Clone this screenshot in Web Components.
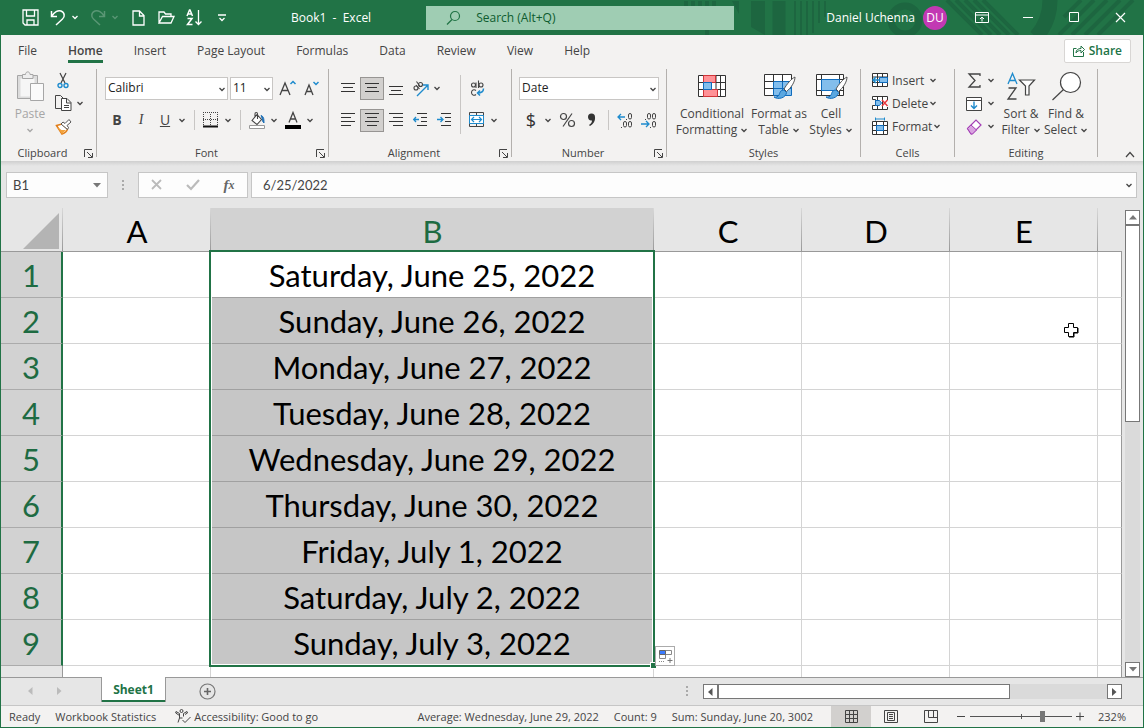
<!DOCTYPE html>
<html lang="en">
<head>
<meta charset="utf-8">
<title>Book1 - Excel</title>
<style>
  html, body { height: 100%; }
  body {
    margin: 0;
    font: 12px/16px "Open Sans", "Noto Sans", sans-serif;
    color: #444;
    --green: #217346;
    --bar: #f3f2f1;
    --head: #e6e6e6;
    --blue: #1e8bcd;
  }
</style>
</head>
<body>
<xl-app></xl-app>

<script>
(function() {
  // icon name -> [width, height, svg content]
  const lines = (rows) => rows.map(r => `<path d="M${r[0]} ${r[1]}.5h${r[2]}" stroke="#333"/>`).join('');
  const brush = '<path d="M31 5c-4 2-8 7-11 12l2.500 2.500C27 16 31 10 31 5z" fill="#fff" stroke="#555"/><path d="M20 18c-4 0-4 3-5 5-1 2-3 2-5 2 4 3 12 1 12.500-4.500z" fill="#5aa7e0" stroke="#0f6cbd"/>';
  const icons = {
    chevron: [8, 5, '<path d="M1.500 1l2.500 2.500L6.500 1" stroke="currentColor" stroke-width="1.300"/>'],
    save: [17, 17, '<path d="M1 1h15v15H3l-2-2zM4.500 1v6h8V1M5 16v-5h7v5" stroke="currentColor" stroke-width="1.300"/>'],
    undo: [16, 17, '<path d="M1.500 2v5.500H7M2 7c2-4 6-6 9-5 4 1.500 4 6 1.500 8L6 16" stroke="currentColor" stroke-width="1.500"/>'],
    redo: [16, 17, '<path d="M14.500 2v5.500H9M14 7c-2-4-6-6-9-5-4 1.500-4 6-1.500 8L10 16" stroke="currentColor" stroke-width="1.500"/>'],
    newfile: [13, 16, '<path d="M1 1h6.500L12 5.500V15H1zM7.500 1v5H12" stroke="currentColor" stroke-width="1.300"/>'],
    open: [17, 13, '<path d="M1 12V1h5l1.500 2H13v2.500M1 12l3.500-6.500H16L13 12z" stroke="currentColor" stroke-width="1.300"/>'],
    sortdown: [17, 17, '<path d="M1 7l2.500-6h.5l2.500 6M2 5h3.500M1.500 9.500H6L1.500 15.500H6.500" stroke="currentColor" stroke-width="1.500"/><path d="M12.500 1v15M9.500 12.500l3 3 3-3" stroke="currentColor" stroke-width="1.300"/>'],
    custom: [8, 8, '<path d="M0 1h8M1.500 4l2.500 2.500L6.500 4" stroke="currentColor" stroke-width="1.300"/>'],
    search: [15, 15, '<circle cx="9" cy="6" r="4.500" stroke="#217346" stroke-width="1.200"/><path d="M6 9.500 1 14.500" stroke="#217346" stroke-width="1.200"/>'],
    display: [14, 12, '<path d="M.5.500h13v10H.5zM.5 3h13M7 9.500V5M5 7l2-2 2 2" stroke="currentColor"/>'],
    min: [10, 3, '<path d="M0 1.500h10" stroke="currentColor"/>'],
    max: [11, 11, '<path d="M.5.500h9v9h-9z" stroke="currentColor"/>'],
    close: [11, 11, '<path d="M1 1l9 9M10 1l-9 9" stroke="currentColor" stroke-width="1.200"/>'],
    share: [12, 13, '<path d="M3.500 4.500h-3v8h10V8M3 9c0-3 2-4.500 5-4.500V2l3.500 3.500L8 9V6.500C6 6.500 4 7 3 9z" stroke="#217346"/>'],
    paste: [28, 31, '<path d="M1.500 4.500h20v23h-20z" fill="#dcdcdc" stroke="#a6a6a6"/><path d="M4.500 7.500h14v18h-14z" fill="#f6f6f6"/><path d="M6.500 7.500v-4h3C9.500 0 14 0 14 3.500h3v4z" fill="#eee" stroke="#a6a6a6"/><path d="M14.500 12.500h13v17h-13z" fill="#fafafa" stroke="#a6a6a6"/>'],
    cut: [12, 17, '<path d="M3 1l5 10M9 1 4 11" stroke="#444" stroke-width="1.200"/><circle cx="3" cy="13.500" r="2" stroke="#1e8bcd" stroke-width="1.400"/><circle cx="9" cy="13.500" r="2" stroke="#1e8bcd" stroke-width="1.400"/>'],
    copy: [17, 17, '<path d="M6 13.500H.5v-13h5L8 3" stroke="#444"/><path d="M6.500 3.500H12l4 4v8H6.500zM11.500 3.500V8H16" fill="#fff" stroke="#444"/><path d="M9 10.500h5M9 12.500h5" stroke="#444"/>'],
    painter: [17, 16, '<path d="M1.500 6.500 7 15c3-1 5-3 5.500-5L7 5z" fill="#fff" stroke="#e07c17" stroke-width="1.500"/><path d="M2 8l5 7 4-4-4.500 0z" fill="#f3a33c"/><path d="M6 5l6.500 5.500 1-2L12 6.500 16 3l-2-2.500L10 4.500 8 3z" fill="#fff" stroke="#555"/>'],
    grow: [17, 16, '<path d="M1 15 6 3l5 12M3 10.500h6" stroke="#444" stroke-width="1.300"/><path d="M11.500 4l2.500-2.500L16.500 4" stroke="#1e8bcd" stroke-width="1.500"/>'],
    shrink: [15, 16, '<path d="M1 15 5 5l4 10M2.500 11.500h5" stroke="#444" stroke-width="1.300"/><path d="M9.500 2l2.500 2.500L14.500 2" stroke="#1e8bcd" stroke-width="1.500"/>'],
    borders: [16, 16, '<path d="M0 .5h15M0 7.500h15M.5 2v12M7.500 2v12M14.500 2v12" stroke="#444" stroke-dasharray="1 1"/><path d="M0 14.500h15" stroke="#111" stroke-width="2"/>'],
    fill: [17, 17, '<path d="M3 8.500 8 2.500l4.500 5L8 12.500zM6 5V2c0-2 2.500-2 2.500 0v5" fill="#fff" stroke="#444" stroke-width="1.100"/><path d="M12 3.500c3 1 3 4 3 7.500-2-1-1-4-3-7.500z" fill="#1e6fb5" stroke="#1e6fb5"/><path d="M.5 13.500h15v3H.5z" fill="#fff" stroke="#999"/>'],
    fontcolor: [16, 17, '<path d="M4 10.500 8 .5l4 10M5.500 7h5" stroke="#444" stroke-width="1.300"/><path d="M0 13h16v4H0z" fill="#000"/>'],
    top: [14, 16, lines([[0, 3, 14], [2, 7, 10], [0, 11, 14]])],
    middle: [14, 16, lines([[0, 3, 14], [2, 7, 10], [0, 11, 14]])],
    bottom: [14, 16, lines([[0, 6, 14], [2, 10, 10], [0, 14, 14]])],
    left: [14, 16, lines([[0, 1, 14], [0, 5, 10], [0, 9, 14], [0, 13, 10]])],
    center: [14, 16, lines([[0, 1, 14], [2, 5, 10], [0, 9, 14], [2, 13, 10]])],
    right: [14, 16, lines([[0, 1, 14], [4, 5, 10], [0, 9, 14], [4, 13, 10]])],
    outdent: [14, 16, lines([[4, 1, 10], [8, 5, 6], [8, 9, 6], [4, 13, 10]]) + '<path d="M6 7.500H1M3 5 .7 7.500 3 10" stroke="#1e8bcd" stroke-width="1.300"/>'],
    indent: [14, 16, lines([[4, 1, 10], [8, 5, 6], [8, 9, 6], [4, 13, 10]]) + '<path d="M0 7.500h5M3.500 5 6 7.500 3.500 10" stroke="#1e8bcd" stroke-width="1.300"/>'],
    orient: [17, 17, '<g stroke="#444" stroke-width="1.100"><circle cx="4" cy="8" r="2"/><path d="M4 5l3.500 4M4.500 1.500l4 5.500"/><circle cx="8.500" cy="4.500" r="2"/></g><path d="M5 16 16 5M11 5h5v5" stroke="#1e8bcd" stroke-width="1.400"/>'],
    wrap: [15, 17, '<g stroke="#444" stroke-width="1.100"><circle cx="3.500" cy="5" r="2"/><path d="M6 2.500V8M8.500.5V8"/><circle cx="11" cy="5" r="2"/><path d="M6 10.500c-2-1.500-4.500-.5-4.500 2s2.500 3.500 4.500 2"/></g><path d="M13.500 8.500c0 3-2 4.500-6 4.500M10 10.500 7.500 13l2.500 2.500" stroke="#1e8bcd" stroke-width="1.500"/>'],
    merge: [16, 16, '<path d="M.5.500h14v14H.5zM7.500.500v3M7.500 11.500v3" stroke="#444"/><path d="M.5 3.500h14v8H.5z" fill="#fff" stroke="#1e8bcd"/><path d="M2.500 7.500h10M5 5 2.500 7.500 5 10M10 5l2.500 2.500L10 10" stroke="#1e8bcd" stroke-width="1.200"/>'],
    incdec: [16, 17, '<path d="M1 5h7M4 2 1 5l3 3" stroke="#1e8bcd" stroke-width="1.300"/><g stroke="#444"><rect x="11.500" y="1.500" width="3" height="5.500" rx="1.500"/><rect x="6.500" y="9.500" width="3" height="5.500" rx="1.500"/><rect x="11.500" y="9.500" width="3" height="5.500" rx="1.500"/><path d="M9 7.500h1M4 15.500h1"/></g>'],
    decdec: [16, 17, '<path d="M0 12h8M5 9l3 3-3 3" stroke="#1e8bcd" stroke-width="1.300"/><g stroke="#444"><rect x="6.500" y="1.500" width="3" height="5.500" rx="1.500"/><rect x="11.500" y="1.500" width="3" height="5.500" rx="1.500"/><rect x="11.500" y="9.500" width="3" height="5.500" rx="1.500"/><path d="M4 7.500h1M9 15.500h1"/></g>'],
    percent: [17, 16, '<circle cx="4.500" cy="4.500" r="3" stroke="#444" stroke-width="1.200"/><circle cx="12.500" cy="11.500" r="3" stroke="#444" stroke-width="1.200"/><path d="M13 1.500 4 14.500" stroke="#444" stroke-width="1.200"/>'],
    comma: [9, 14, '<path d="M1 4a3.500 3.500 0 0 1 7 0c.5 4-2 7.500-5 9l-1-1c2-1 3-3 3-4.500C2.500 8 1 6 1 4z" fill="#333"/>'],
    cond: [28, 24, '<path d="M.5 1.500h27v21H.5zM.5 8.500h27M.5 15.500h27M5.500 1.500v21M18 1.500v21M22.500 1.500v21" fill="#fff" stroke="#333"/><path d="M5.500 1.500h12v7h-12zM5.500 15.500h14v7h-14z" fill="#ff9297" stroke="#d13438"/><path d="M5.500 8.500h8v7h-8z" fill="#83beec" stroke="#0f6cbd"/>'],
    table: [30, 28, '<path d="M.5 2.500h27v21H.5z" fill="#fff"/><path d="M9.500 9.500h18v14h-18z" fill="#83beec"/><path d="M9.500 9.500h18v14h-18zM18.500 9v14M9.500 16.500h18" stroke="#0f6cbd"/><path d="M.5 9V2.500h27V9M.5 9v14.500h9M.5 9.500h9M.5 16.500h9M9.500 2.500v7M18.500 2.500v7" stroke="#333"/>' + brush],
    styles: [30, 28, '<path d="M.5 2.500h27v21H.5zM.5 7.500h27M.5 18.500h27M5.500 2.500v21M23.500 2.500v21" fill="#fff" stroke="#333"/><path d="M5.500 7.500h18v11h-18z" fill="#83beec" stroke="#0f6cbd"/>' + brush],
    cellins: [17, 15, '<path d="M.5.500h15v13H.5zM.5 4h15M.5 9.500h15M5.500.500v13M10.500.500v13" fill="#fff" stroke="#333"/><path d="M7.500 4.500h8v5h-8z" fill="#83beec" stroke="#0f6cbd"/><path d="M8 7H1M4 4 1 7l3 3" stroke="#1e8bcd" stroke-width="1.500"/>'],
    celldel: [17, 15, '<path d="M15.500 4V.500H.5v3h3v6h-3v4h15V11M5.500.500v13M10.500.500v13" fill="#fff" stroke="#333"/><path d="M3.500 4.500h4l2 2.500-2 2.500h-4z" fill="#83beec" stroke="#0f6cbd"/><path d="M10 4l5.500 6M15.500 4 10 10" stroke="#e8383d" stroke-width="1.500"/>'],
    cellfmt: [17, 17, '<path d="M.5 3.500h15v13H.5zM.5 7.500h15M.5 12.500h15M4.500 3.500v13M11.500 3.500v13" fill="#fff" stroke="#333"/><path d="M4.500 7.500h7v5h-7z" fill="#83beec" stroke="#0f6cbd"/><path d="M3.500 1h9M3.500-.5v3M12.500-.5v3" stroke="#1e8bcd"/>'],
    sum: [13, 15, '<path d="M12 3V1H1l6 6.500L1 14h11v-2" stroke="#444" stroke-width="1.300"/>'],
    filldown: [16, 14, '<path d="M.5.500h15v13H.5zM.5 3.500h15" fill="#fff" stroke="#444"/><path d="M8 4.500v7M5 8.500l3 3 3-3" stroke="#1e8bcd" stroke-width="1.400"/>'],
    eraser: [17, 16, '<path d="M1.500 9.500 10 1l5 5-9 9H5z" fill="#fff" stroke="#a33fb5" stroke-width="1.200"/><path d="M1.500 9.500 5 6l5.500 5L6.500 15H5z" fill="#d9a3e0" stroke="#a33fb5"/>'],
    sortfilter: [29, 29, '<path d="M1 12 5.500 1.500 10 12M2.500 8.500h6" stroke="#1e8bcd" stroke-width="1.300"/><path d="M1.500 16h7.500l-8 11h8.500" stroke="#444" stroke-width="1.300"/><path d="M12.500 8h15l-5.500 6v9h-3.500v-9z" fill="#fff" stroke="#444" stroke-width="1.200"/>'],
    find: [28, 30, '<circle cx="18.500" cy="11.500" r="10" fill="#fff" stroke="#444" stroke-width="1.200"/><path d="M11.500 18.500.5 29" stroke="#444" stroke-width="1.200"/>'],
    launcher: [9, 9, '<path d="M8 .5H.5V8M3 3l5 5M8.500 4v4.500H4" stroke="#444"/>'],
    collapse: [10, 7, '<path d="M1 6l4-4.500L9 6" stroke="#444" stroke-width="1.200"/>'],
    down: [8, 5, '<path d="M0 0h8L4 4.500z" fill="#777"/>'],
    dots: [3, 11, '<path d="M0 0h2v2H0zM0 4h2v2H0zM0 8h2v2H0z" fill="#aaa"/>'],
    cancel: [12, 12, '<path d="M1 1l9 9M10 1 1 10" stroke="#bbb" stroke-width="1.800"/>'],
    enter: [14, 12, '<path d="M1 6l4 4L13 1" stroke="#bbb" stroke-width="2.200"/>'],
    tup: [8, 5, '<path d="M0 4.500h8L4 0z" fill="#777"/>'],
    tleft: [5, 8, '<path d="M4.500 0v8L0 4z" fill="currentColor"/>'],
    tright: [5, 8, '<path d="M0 0v8l4.500-4z" fill="currentColor"/>'],
    plus: [17, 17, '<circle cx="8.500" cy="8.500" r="7.500" stroke="#777" stroke-width="1.200"/><path d="M8.500 5v7M5 8.500h7" stroke="#666" stroke-width="1.600"/>'],
    access: [16, 15, '<circle cx="6.500" cy="2" r="1.500" stroke="#444"/><path d="M1 2.500l3.500 2v4.500L3 13.500M12 2.500 8.500 4.500v3M4.500 9h3M1 2.500l-.3 1.500L4.500 6.500M12 2.500l.5 1.500L10 5.500M7.500 11l2.500 2.500L15.500 8" stroke="#444"/>'],
    vnormal: [13, 13, '<path d="M.5.500h12v12H.5zM4.500.500v12M8.500.500v12M.5 4.500h12M.5 8.500h12" stroke="#444"/>'],
    vlayout: [14, 13, '<path d="M.5.500h13v12H.5zM3.500 2.500h7v8h-7zM5 4.500h4M5 6.500h4M5 8.500h4" stroke="#444"/>'],
    vbreak: [14, 13, '<path d="M.5.500h13v12H.5zM4.500.500v7h9M9.500.500v7" stroke="#444"/>'],
    minus: [9, 9, '<path d="M0 4.500h8" stroke="#444"/>'],
    add: [9, 9, '<path d="M0 4.500h8M4 .5v8" stroke="#444"/>'],
    autofill: [15, 15, '<path d="M7.500 1.500h6v4h-6zM1.500 5.500h6v4h-6z" fill="#fff" stroke="#888"/><path d="M1.500 1.500h6v4h-6z" fill="#3b7cff" stroke="#666"/><path d="M1 12.500h6" stroke="#888" stroke-dasharray="1 1"/><path d="M9.500 11.500h5M12 9v5" stroke="#777"/>'],
    cursor: [16, 16, '<path d="M5.500 1.500h5v4h4v5h-4v4h-5v-4h-4v-5h4z" fill="#fff" stroke="#000"/><path d="M6 15h5v-4h4V6" stroke="#000"/>']
  };

  const base = '*{box-sizing:border-box} :host([hidden]){display:none}' +
    'button{font:inherit;color:inherit;background:none;border:0;padding:0;margin:0}';

  function define(name, html, setup) {
    const template = document.createElement('template');
    template.innerHTML = html.replace('<style>', '<style>' + base);
    customElements.define(name, class extends HTMLElement {
      constructor() {
        super();
        this.attachShadow({ mode: 'open' });
        this.shadowRoot.appendChild(template.content.cloneNode(true));
      }

      connectedCallback() {
        if (setup) setup(this, this.shadowRoot);
      }
    });
  }

  define('xl-icon', `
    <style>
      :host { display: inline-flex; flex: none; }
      svg { display: block; fill: none; overflow: visible; }
    </style>
    <svg aria-hidden="true"></svg>`, (el, root) => {
    const [w, h, body] = icons[el.getAttribute('name')];
    const svg = root.querySelector('svg');
    svg.setAttribute('width', w);
    svg.setAttribute('height', h);
    svg.setAttribute('viewBox', `0 0 ${w} ${h}`);
    svg.innerHTML = body;
  });

  // small button: icon or slotted text in a 24px cell, optional menu arrow
  define('xl-button', `
    <style>
      :host { display: flex; flex: none; height: 23px; }
      button { display: flex; align-items: center; height: 100%; white-space: nowrap; }
      .cell { display: flex; justify-content: center; align-items: center; width: 24px; height: 100%; }
      :host([pressed]) .cell { background: #d2d0ce; box-shadow: inset 0 0 0 1px #979593; }
      .menu { display: flex; justify-content: center; width: 10px; margin-right: 2px; }
      .text { min-width: 36px; text-align: left; }
      :host(:not([text])) .text, :host(:not([menu])) .menu { display: none; }
      :host([disabled]) { opacity: .25; }
    </style>
    <button type="button"><span class="cell"><slot></slot></span><span class="text"></span><span class="menu"><xl-icon name="chevron"></xl-icon></span></button>`, (el, root) => {
    const button = root.querySelector('button');
    if (el.hasAttribute('icon')) {
      root.querySelector('.cell').innerHTML = `<xl-icon name="${el.getAttribute('icon')}"></xl-icon>`;
    }
    if (el.hasAttribute('text')) root.querySelector('.text').textContent = el.getAttribute('text');
    else button.setAttribute('aria-label', el.getAttribute('label'));
    if (el.hasAttribute('pressed')) button.setAttribute('aria-pressed', 'true');
    button.disabled = el.hasAttribute('disabled');
  });

  // tall button with two lines below its icon
  define('xl-big-button', `
    <style>
      :host { display: block; flex: none; }
      button { display: flex; flex-direction: column; align-items: center; width: 100%; white-space: nowrap; }
      .icon { display: flex; align-items: center; height: 34px; margin-bottom: 3px; }
      .last { display: flex; align-items: center; gap: 3px; height: 16px; }
    </style>
    <button type="button"><span class="icon"></span><slot></slot><span class="last"><slot name="last"></slot><xl-icon name="chevron"></xl-icon></span></button>`, (el, root) => {
    root.querySelector('.icon').innerHTML = `<xl-icon name="${el.getAttribute('icon')}"></xl-icon>`;
  });

  define('xl-select', `
    <style>
      :host { display: flex; flex: none; height: 23px; position: relative; }
      select {
        appearance: none; width: 100%; height: 100%; padding: 0 2px; border: 1px solid #c8c6c4;
        border-radius: 0; background: #fff; color: #222; font: inherit;
      }
      xl-icon { position: absolute; right: 2px; top: 10px; }
    </style>
    <select><option></option></select><xl-icon name="chevron"></xl-icon>`, (el, root) => {
    root.querySelector('select').setAttribute('aria-label', el.getAttribute('label'));
    root.querySelector('option').textContent = el.getAttribute('value');
  });

  define('xl-titlebar', `
    <style>
      :host {
        display: flex; align-items: center; position: relative; height: 35px; flex: none;
        background: var(--green); color: #fff; padding-left: 17px; overflow: hidden;
      }
      .art { position: absolute; right: 0; top: 0; fill: none; stroke: #1d6640; }
      .tools { display: flex; gap: 4px; }
      h1 { margin: 0 0 0 57px; font: inherit; white-space: pre; }
      .search {
        position: relative; display: flex; align-items: center; gap: 15px; flex: 0 1 308px; height: 24px;
        margin-left: 55px; padding-left: 20px; background: #9fcdb3;
      }
      input { flex: 1; min-width: 0; border: 0; padding: 0; background: none; font: inherit; color: #0e5c2f; }
      input::placeholder { color: #0e5c2f; opacity: 1; }
      .user { display: flex; align-items: center; gap: 8px; margin-left: auto; position: relative; }
      .avatar {
        width: 24px; height: 24px; border-radius: 50%; background: #c239b3; line-height: 24px; text-align: center;
      }
      .win { display: flex; position: relative; margin-left: 12px; }
      .win button { display: flex; justify-content: center; align-items: center; width: 46px; height: 34px; }
    </style>
    <svg class="art" width="460" height="35" aria-hidden="true">
      <path d="M3 1v5M10 1v5M17 1v5M24 1v5M31 1v5M24 30v5" stroke-width="4"/>
      <path d="M49 1h7v13zM68 1h14v34l-14-8z" fill="#1d6640" stroke="none"/>
      <path d="M96 1v34" stroke-width="13"/>
      <path d="M112 1v34M118 1v34M124 1v34M130 1v32M136 1v22M142 1v16" stroke-width="2"/>
      <circle cx="222" cy="20" r="14" stroke-width="7"/>
      <path d="M264 0l35 35M273 0l35 35M282 0l35 35M291 0l35 35M300 0l35 35" stroke-width="4"/>
      <path d="M367 0c0 16-6 28-14 37" stroke-width="15"/>
      <path d="M398 0l-17 17M411 0l-35 35M424 0l-35 35M437 0l-35 35M450 0l-35 35" stroke-width="4"/>
    </svg>
    <div class="tools">
      <xl-button icon="save" label="Save"></xl-button>
      <xl-button icon="undo" label="Undo" menu></xl-button>
      <xl-button icon="redo" label="Redo" menu disabled></xl-button>
      <xl-button icon="newfile" label="New"></xl-button>
      <xl-button icon="open" label="Open"></xl-button>
      <xl-button icon="sortdown" label="Sort Ascending"></xl-button>
      <xl-button icon="custom" label="Customize Quick Access Toolbar"></xl-button>
    </div>
    <h1>Book1  -  Excel</h1>
    <div class="search"><xl-icon name="search"></xl-icon><input type="text" aria-label="Search" placeholder="Search (Alt+Q)"></div>
    <div class="user"><span>Daniel Uchenna</span><span class="avatar">DU</span></div>
    <div class="win">
      <button type="button" aria-label="Ribbon Display Options"><xl-icon name="display"></xl-icon></button>
      <button type="button" aria-label="Minimize"><xl-icon name="min"></xl-icon></button>
      <button type="button" aria-label="Maximize"><xl-icon name="max"></xl-icon></button>
      <button type="button" aria-label="Close"><xl-icon name="close"></xl-icon></button>
    </div>`);

  define('xl-tabs', `
    <style>
      :host { display: flex; align-items: center; flex: none; height: 31px; padding: 0 12px 0 17px; background: var(--bar); }
      nav { display: flex; gap: 31px; flex: 1; }
      a { padding-top: 4px; color: inherit; text-decoration: none; line-height: 18px; border-bottom: 3px solid transparent; white-space: nowrap; }
      a.on { font-weight: 600; border-color: var(--green); }
      .share {
        display: flex; align-items: center; gap: 4px; height: 24px; padding: 0 8px; background: #fff;
        border: 1px solid #d8d6d4; border-radius: 2px; color: var(--green); font-weight: 600;
      }
    </style>
    <nav>
      <a href="#file">File</a><a href="#home" class="on">Home</a><a href="#insert">Insert</a><a href="#layout">Page Layout</a>
      <a href="#formulas">Formulas</a><a href="#data">Data</a><a href="#review">Review</a><a href="#view">View</a><a href="#help">Help</a>
    </nav>
    <button type="button" class="share"><xl-icon name="share"></xl-icon>Share</button>`);

  define('xl-group', `
    <style>
      :host {
        display: flex; flex-direction: column; flex: none; height: 92px; padding-right: 1px;
        background: linear-gradient(#b3b0ad, #b3b0ad) right top / 1px 88px no-repeat;
      }
      .body { display: flex; flex: 1; }
      footer { display: flex; align-items: center; height: 16px; padding: 0 3px 0 0; font-size: 11px; }
      footer span { flex: 1; text-align: center; }
      button { display: flex; }
      :host([plain]) footer { padding: 0; }
      :host([plain]) button { display: none; }
    </style>
    <div class="body"><slot></slot></div>
    <footer><span></span><button type="button" aria-label="More options"><xl-icon name="launcher"></xl-icon></button></footer>`, (el, root) => {
    root.querySelector('footer span').textContent = el.getAttribute('label');
  });

  define('xl-ribbon', `
    <style>
      :host { display: flex; flex: none; height: 95px; padding-top: 3px; background: var(--bar); box-sizing: border-box; }
      .stack { display: flex; flex-direction: column; }
      .rows { display: flex; flex-direction: column; padding-top: 3px; }
      .row { display: flex; align-items: center; height: 32px; }
      .sep { width: 1px; height: 20px; background: #c8c6c4; margin: 0 4px 0 5px; }
      .tall { height: 59px; margin: 6px 4px 0; }
      .clip { width: 96px; }
      .font { width: 232px; }
      .align { width: 183px; }
      .num { width: 155px; }
      .styles { width: 194px; }
      .cells { width: 94px; }
      .edit { width: 143px; }
      .gray { color: #a6a6a6; }
      .letter { font-size: 14px; }
      .dollar { font-size: 18px; color: #333; }
      .end { display: flex; flex: 1; justify-content: flex-end; align-items: flex-end; padding: 0 8px 3px 0; }
      .end button { display: flex; }
    </style>
    <xl-group label="Clipboard" class="clip">
      <xl-big-button icon="paste" class="gray" style="width: 42px; margin-left: 8px"><span>Paste</span></xl-big-button>
      <div class="stack">
        <xl-button icon="cut" label="Cut"></xl-button>
        <xl-button icon="copy" label="Copy" menu></xl-button>
        <xl-button icon="painter" label="Format Painter"></xl-button>
      </div>
    </xl-group>
    <xl-group label="Font" class="font">
      <div class="rows" style="padding-left: 8px">
        <div class="row">
          <xl-select label="Font" value="Calibri" style="width: 123px; margin-right: 2px"></xl-select>
          <xl-select label="Font Size" value="11" style="width: 43px; margin-right: 2px"></xl-select>
          <xl-button icon="grow" label="Increase Font Size"></xl-button>
          <xl-button icon="shrink" label="Decrease Font Size"></xl-button>
        </div>
        <div class="row">
          <xl-button label="Bold"><b class="letter">B</b></xl-button>
          <xl-button label="Italic"><i class="letter" style="font-family: 'Liberation Serif', serif">I</i></xl-button>
          <xl-button label="Underline" menu><u class="letter">U</u></xl-button>
          <span class="sep"></span>
          <xl-button icon="borders" label="Borders" menu></xl-button>
          <span class="sep"></span>
          <xl-button icon="fill" label="Fill Color" menu></xl-button>
          <xl-button icon="fontcolor" label="Font Color" menu></xl-button>
        </div>
      </div>
    </xl-group>
    <xl-group label="Alignment" class="align">
      <div class="rows" style="padding-left: 7px">
        <div class="row">
          <xl-button icon="top" label="Top Align"></xl-button>
          <xl-button icon="middle" label="Middle Align" pressed></xl-button>
          <xl-button icon="bottom" label="Bottom Align"></xl-button>
          <xl-button icon="orient" label="Orientation" menu></xl-button>
        </div>
        <div class="row">
          <xl-button icon="left" label="Align Left"></xl-button>
          <xl-button icon="center" label="Center" pressed></xl-button>
          <xl-button icon="right" label="Align Right"></xl-button>
          <xl-button icon="outdent" label="Decrease Indent"></xl-button>
          <xl-button icon="indent" label="Increase Indent"></xl-button>
        </div>
      </div>
      <span class="sep tall"></span>
      <div class="rows">
        <div class="row"><xl-button icon="wrap" label="Wrap Text"></xl-button></div>
        <div class="row"><xl-button icon="merge" label="Merge and Center" menu></xl-button></div>
      </div>
    </xl-group>
    <xl-group label="Number" class="num">
      <div class="rows" style="padding-left: 7px">
        <div class="row"><xl-select label="Number Format" value="Date" style="width: 140px"></xl-select></div>
        <div class="row">
          <xl-button label="Accounting Number Format" menu><span class="dollar">$</span></xl-button>
          <xl-button icon="percent" label="Percent Style"></xl-button>
          <xl-button icon="comma" label="Comma Style"></xl-button>
          <span class="sep"></span>
          <xl-button icon="incdec" label="Increase Decimal"></xl-button>
          <xl-button icon="decdec" label="Decrease Decimal"></xl-button>
        </div>
      </div>
    </xl-group>
    <xl-group label="Styles" class="styles" plain>
      <xl-big-button icon="cond" style="width: 74px; margin-left: 8px"><span>Conditional</span><span slot="last">Formatting</span></xl-big-button>
      <xl-big-button icon="table" style="width: 60px"><span>Format as</span><span slot="last">Table</span></xl-big-button>
      <xl-big-button icon="styles" style="width: 44px"><span>Cell</span><span slot="last">Styles</span></xl-big-button>
    </xl-group>
    <xl-group label="Cells" class="cells" plain>
      <div class="stack" style="padding-left: 7px">
        <xl-button icon="cellins" text="Insert" menu></xl-button>
        <xl-button icon="celldel" text="Delete" menu></xl-button>
        <xl-button icon="cellfmt" text="Format" menu></xl-button>
      </div>
    </xl-group>
    <xl-group label="Editing" class="edit" plain>
      <div class="stack" style="padding-left: 7px">
        <xl-button icon="sum" label="AutoSum" menu></xl-button>
        <xl-button icon="filldown" label="Fill" menu></xl-button>
        <xl-button icon="eraser" label="Clear" menu></xl-button>
      </div>
      <xl-big-button icon="sortfilter" style="width: 46px"><span>Sort &amp;</span><span slot="last">Filter</span></xl-big-button>
      <xl-big-button icon="find" style="width: 44px"><span>Find &amp;</span><span slot="last">Select</span></xl-big-button>
    </xl-group>
    <div class="end"><button type="button" aria-label="Collapse the Ribbon"><xl-icon name="collapse"></xl-icon></button></div>`);

  define('xl-formula-bar', `
    <style>
      :host {
        display: flex; flex: none; height: 47px; padding: 11px 6px 10px 5px; box-sizing: border-box;
        background: linear-gradient(#cfcfcf, #e6e6e6 5px); font-family: Lato, sans-serif; font-size: 13px;
      }
      .box { display: flex; align-items: center; background: #fdfdfd; border: 1px solid #c6c6c6; }
      .name { width: 102px; padding-right: 6px; }
      input { flex: 1; min-width: 0; border: 0; padding: 0; background: none; font: inherit; color: inherit; }
      .name input { padding-left: 6px; }
      .grip { width: 30px; display: flex; justify-content: center; align-items: center; }
      .acts { width: 110px; justify-content: space-around; }
      .acts button { display: flex; justify-content: center; width: 36px; }
      .fx { font: italic bold 15px/16px "Liberation Serif", serif; color: #666; }
      .fx small { font-size: 12px; }
      .formula { flex: 1; margin-left: 3px; padding: 0 3px 0 11px; }
      .formula button { display: flex; }
    </style>
    <div class="box name"><input type="text" aria-label="Name Box" value="B1"><xl-icon name="down"></xl-icon></div>
    <span class="grip"><xl-icon name="dots"></xl-icon></span>
    <div class="box acts">
      <button type="button" aria-label="Cancel"><xl-icon name="cancel"></xl-icon></button>
      <button type="button" aria-label="Enter"><xl-icon name="enter"></xl-icon></button>
      <button type="button" class="fx" aria-label="Insert Function">f<small>x</small></button>
    </div>
    <div class="box formula"><input type="text" aria-label="Formula Bar" value="6/25/2022"><button type="button" aria-label="Expand Formula Bar"><xl-icon name="chevron"></xl-icon></button></div>`);

  const days = [
    'Saturday, June 25, 2022', 'Sunday, June 26, 2022', 'Monday, June 27, 2022',
    'Tuesday, June 28, 2022', 'Wednesday, June 29, 2022', 'Thursday, June 30, 2022',
    'Friday, July 1, 2022', 'Saturday, July 2, 2022', 'Sunday, July 3, 2022'
  ];

  define('xl-sheet', `
    <style>
      :host { display: block; flex: 1; min-width: 0; overflow: hidden; font: 31px/40px Lato, sans-serif; color: #000; }
      table { width: 100%; table-layout: fixed; border-collapse: separate; border-spacing: 0; }
      th, td { padding: 0; height: 46px; text-align: center; font-weight: 400; white-space: nowrap; }
      thead th {
        height: 44px; padding-top: 3px; line-height: 38px;
        background: linear-gradient(#d8d8d8, #999) right / 1px 100% no-repeat #e6e6e6;
        border-bottom: 1px solid #999;
      }
      thead th.sel { background-color: #d2d2d2; color: #1e6b42; }
      thead th:last-child { background: #e6e6e6; }
      .corner { display: block; width: 36px; height: 36px; margin-left: 22px; background: #b4b4b4; clip-path: polygon(100% 0, 100% 100%, 0 100%); }
      td { background: #fff; border-right: 1px solid #d4d4d4; border-bottom: 1px solid #d4d4d4; }
      td:last-child { border-right-color: #999; }
      tbody th { background: #d2d2d2; color: #1e6b42; border-right: 2px solid var(--green); border-bottom: 1px solid #ababab; }
      tbody tr:last-child th { background: #e6e6e6; border-right: 1px solid #999; }
      td.sel { background: #c6c6c6; border-bottom-color: #a0a0a0; }
      td.active { background: #fff; position: relative; }
      .range {
        position: absolute; left: -2px; right: -2px; top: -2px; height: 417px;
        border: 2px solid var(--green); box-shadow: inset 0 0 0 1px #fff;
      }
      .handle { position: absolute; right: -4px; bottom: -4px; width: 7px; height: 7px; background: var(--green); border: 1px solid #fff; }
      .fillopts {
        position: absolute; right: -22px; bottom: -1px; display: flex; justify-content: center; align-items: center;
        width: 20px; height: 20px; background: #fff; border: 1px solid #ababab;
      }
      .host { position: relative; }
      .host xl-icon { position: absolute; left: 113px; top: 24px; }
    </style>
    <table>
      <colgroup>
        <col style="width: 62px"><col style="width: 148px"><col style="width: 443px">
        <col style="width: 148px"><col style="width: 148px"><col style="width: 148px"><col>
      </colgroup>
      <thead><tr><th><span class="corner"></span></th><th>A</th><th class="sel">B</th><th>C</th><th>D</th><th>E</th><th></th></tr></thead>
      <tbody></tbody>
    </table>`, (el, root) => {
    root.querySelector('tbody').innerHTML = days.map((day, i) => `
      <tr>
        <th scope="row">${i + 1}</th><td></td>
        <td class="sel${i === 0 ? ' active' : ''}">${day}</td>
        <td></td><td></td><td class="e"></td><td></td>
      </tr>`).join('') + '<tr><th></th><td></td><td></td><td></td><td></td><td></td><td></td></tr>';
    root.querySelector('.active').insertAdjacentHTML('beforeend',
      '<div class="range"><span class="handle"></span><button type="button" class="fillopts" aria-label="Auto Fill Options"><xl-icon name="autofill"></xl-icon></button></div>');
    const e2 = root.querySelectorAll('.e')[1];
    e2.classList.add('host');
    e2.innerHTML = '<xl-icon name="cursor"></xl-icon>';
  });

  define('xl-scrollbar', `
    <style>
      :host { display: flex; background: #dadada; color: #555; }
      :host([vertical]) { flex-direction: column; width: 15px; }
      :host(:not([vertical])) { height: 15px; }
      button, .thumb { background: #fff; border: 1px solid #777; }
      button { display: flex; justify-content: center; align-items: center; width: 15px; height: 15px; flex: none; }
      .track { flex: 1; display: flex; flex-direction: inherit; }
      .thumb { flex: 0 0 var(--size); }
    </style>
    <button type="button" aria-label="Scroll back"></button>
    <div class="track"><div class="thumb"></div></div>
    <button type="button" aria-label="Scroll forward"></button>`, (el, root) => {
    const names = el.hasAttribute('vertical') ? ['tup', 'down'] : ['tleft', 'tright'];
    root.querySelectorAll('button').forEach((b, i) => {
      b.innerHTML = `<xl-icon name="${names[i]}"></xl-icon>`;
    });
  });

  define('xl-sheet-tabs', `
    <style>
      :host { display: flex; flex: none; height: 28px; background: linear-gradient(#999, #999) top / 100% 1px no-repeat #e6e6e6; }
      .nav { display: flex; align-items: center; gap: 24px; width: 100px; padding-left: 27px; color: #bbb; }
      .nav button, .add { display: flex; align-items: center; }
      .tab {
        width: 65px; height: 25px; background: #fff; border: solid #999; border-width: 0 1px;
        box-shadow: inset 0 -2px var(--green); color: var(--green); font-weight: 700;
      }
      .add { margin-left: 33px; }
      .grip { display: flex; align-items: center; margin-left: auto; }
      xl-scrollbar { width: 419px; margin: 7px 21px 0 14px; }
    </style>
    <div class="nav">
      <button type="button" aria-label="Previous sheets"><xl-icon name="tleft"></xl-icon></button>
      <button type="button" aria-label="Next sheets"><xl-icon name="tright"></xl-icon></button>
    </div>
    <button type="button" class="tab">Sheet1</button>
    <button type="button" class="add" aria-label="New sheet"><xl-icon name="plus"></xl-icon></button>
    <span class="grip"><xl-icon name="dots"></xl-icon></span>
    <xl-scrollbar style="--size: 75%"></xl-scrollbar>`);

  define('xl-status', `
    <style>
      :host {
        display: flex; align-items: center; flex: none; height: 22px; padding: 0 17px 0 8px; box-sizing: border-box;
        background: var(--bar); border-top: 1px solid #c6c6c6; font-size: 11px; white-space: nowrap;
      }
      .left, .sums { display: flex; gap: 15px; }
      .left { flex: 1; }
      .acc { display: flex; align-items: center; gap: 3px; margin-left: 4px; }
      .views { display: flex; height: 100%; margin-left: 18px; }
      .views button { display: flex; justify-content: center; align-items: center; width: 40px; }
      .views .on { background: #d2d0ce; }
      .zoom { display: flex; align-items: center; gap: 4px; margin-left: 6px; }
      .zoom button { display: flex; }
      input {
        appearance: none; width: 102px; height: 16px; margin: 0;
        background: linear-gradient(#555, #555) center / 100% 1px no-repeat, linear-gradient(#555, #555) center / 1px 5px no-repeat;
      }
      input::-webkit-slider-thumb { appearance: none; width: 5px; height: 11px; background: #777; }
      .pct { margin-left: 9px; }
    </style>
    <div class="left">
      <span>Ready</span><span>Workbook Statistics</span>
      <span class="acc"><xl-icon name="access"></xl-icon>Accessibility: Good to go</span>
    </div>
    <div class="sums"><span>Average: Wednesday, June 29, 2022</span><span>Count: 9</span><span>Sum: Sunday, June 20, 3002</span></div>
    <div class="views">
      <button type="button" class="on" aria-label="Normal"><xl-icon name="vnormal"></xl-icon></button>
      <button type="button" aria-label="Page Layout"><xl-icon name="vlayout"></xl-icon></button>
      <button type="button" aria-label="Page Break Preview"><xl-icon name="vbreak"></xl-icon></button>
    </div>
    <div class="zoom">
      <button type="button" aria-label="Zoom Out"><xl-icon name="minus"></xl-icon></button>
      <input type="range" aria-label="Zoom" min="0" max="100" value="72">
      <button type="button" aria-label="Zoom In"><xl-icon name="add"></xl-icon></button>
      <span class="pct">232%</span>
    </div>`);

  define('xl-app', `
    <style>
      :host {
        display: flex; flex-direction: column; height: 100vh; border: solid var(--green);
        border-width: 0 1px 1px; background: var(--head); overflow: hidden; box-sizing: border-box;
      }
      main { display: flex; flex: 1; min-height: 0; }
      xl-scrollbar { margin: 2px 3px 0 3px; }
    </style>
    <xl-titlebar></xl-titlebar>
    <xl-tabs></xl-tabs>
    <xl-ribbon></xl-ribbon>
    <xl-formula-bar></xl-formula-bar>
    <main>
      <xl-sheet></xl-sheet>
      <xl-scrollbar vertical style="--size: 197px"></xl-scrollbar>
    </main>
    <xl-sheet-tabs></xl-sheet-tabs>
    <xl-status></xl-status>`);
})();
</script>
</body>
</html>
